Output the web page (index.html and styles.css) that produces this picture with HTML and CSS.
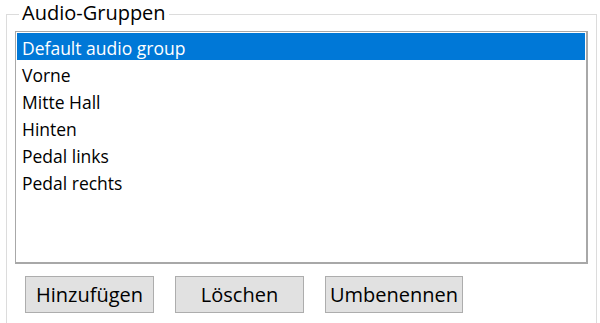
FILE: index.html
```html
<!DOCTYPE html>
<html>
<head>
<meta charset="utf-8">
<link rel="stylesheet" href="styles.css">
</head>
<body>
<div class="group">
  <span class="group-label">Audio-Gruppen</span>
  <ul class="listbox">
    <li class="item selected">Default audio group</li>
    <li class="item">Vorne</li>
    <li class="item">Mitte Hall</li>
    <li class="item">Hinten</li>
    <li class="item">Pedal links</li>
    <li class="item">Pedal rechts</li>
  </ul>
  <div class="buttons">
    <button class="btn btn-add">Hinzufügen</button>
    <button class="btn btn-del">Löschen</button>
    <button class="btn btn-ren">Umbenennen</button>
  </div>
</div>
</body>
</html>
```
FILE: styles.css
```css
html, body {
  margin: 0;
  padding: 0;
  background: #ffffff;
}
body {
  width: 600px;
  height: 323px;
  overflow: hidden;
  font-family: "Open Sans", "Noto Sans", sans-serif;
  font-size: 17px;
  color: #000000;
}
.group {
  position: relative;
  margin: 14px 3px 0 6px;
  height: 309px;
  border: 1px solid #dcdcdc;
  border-bottom: none;
  padding: 16px 8px 0 8px;
  box-sizing: border-box;
}
.group-label {
  position: absolute;
  top: -15px;
  left: 12px;
  padding: 0 3px;
  background: #ffffff;
  line-height: 26px;
  font-size: 20px;
}
.listbox {
  list-style: none;
  margin: 0;
  padding: 1px;
  width: 573px;
  height: 233px;
  box-sizing: border-box;
  border: 1px solid #a8a8a8;
  border-right-width: 2px;
  border-bottom-width: 2px;
}
.item {
  height: 27px;
  box-sizing: border-box;
  padding-top: 2px;
  line-height: 27px;
  padding-left: 5px;
  font-size: 17.5px;
}
.item.selected {
  background: #0078d7;
  color: #ffffff;
}
.buttons {
  display: flex;
  gap: 21px;
  margin-top: 12px;
  padding-left: 10px;
}
.btn {
  height: 37px;
  width: 129px;
  background: #e1e1e1;
  border: 1px solid #adadad;
  font-family: "Open Sans", "Noto Sans", sans-serif;
  font-size: 20px;
  color: #000000;
  padding: 0;
}
.btn-ren {
  width: 138px;
}
```
